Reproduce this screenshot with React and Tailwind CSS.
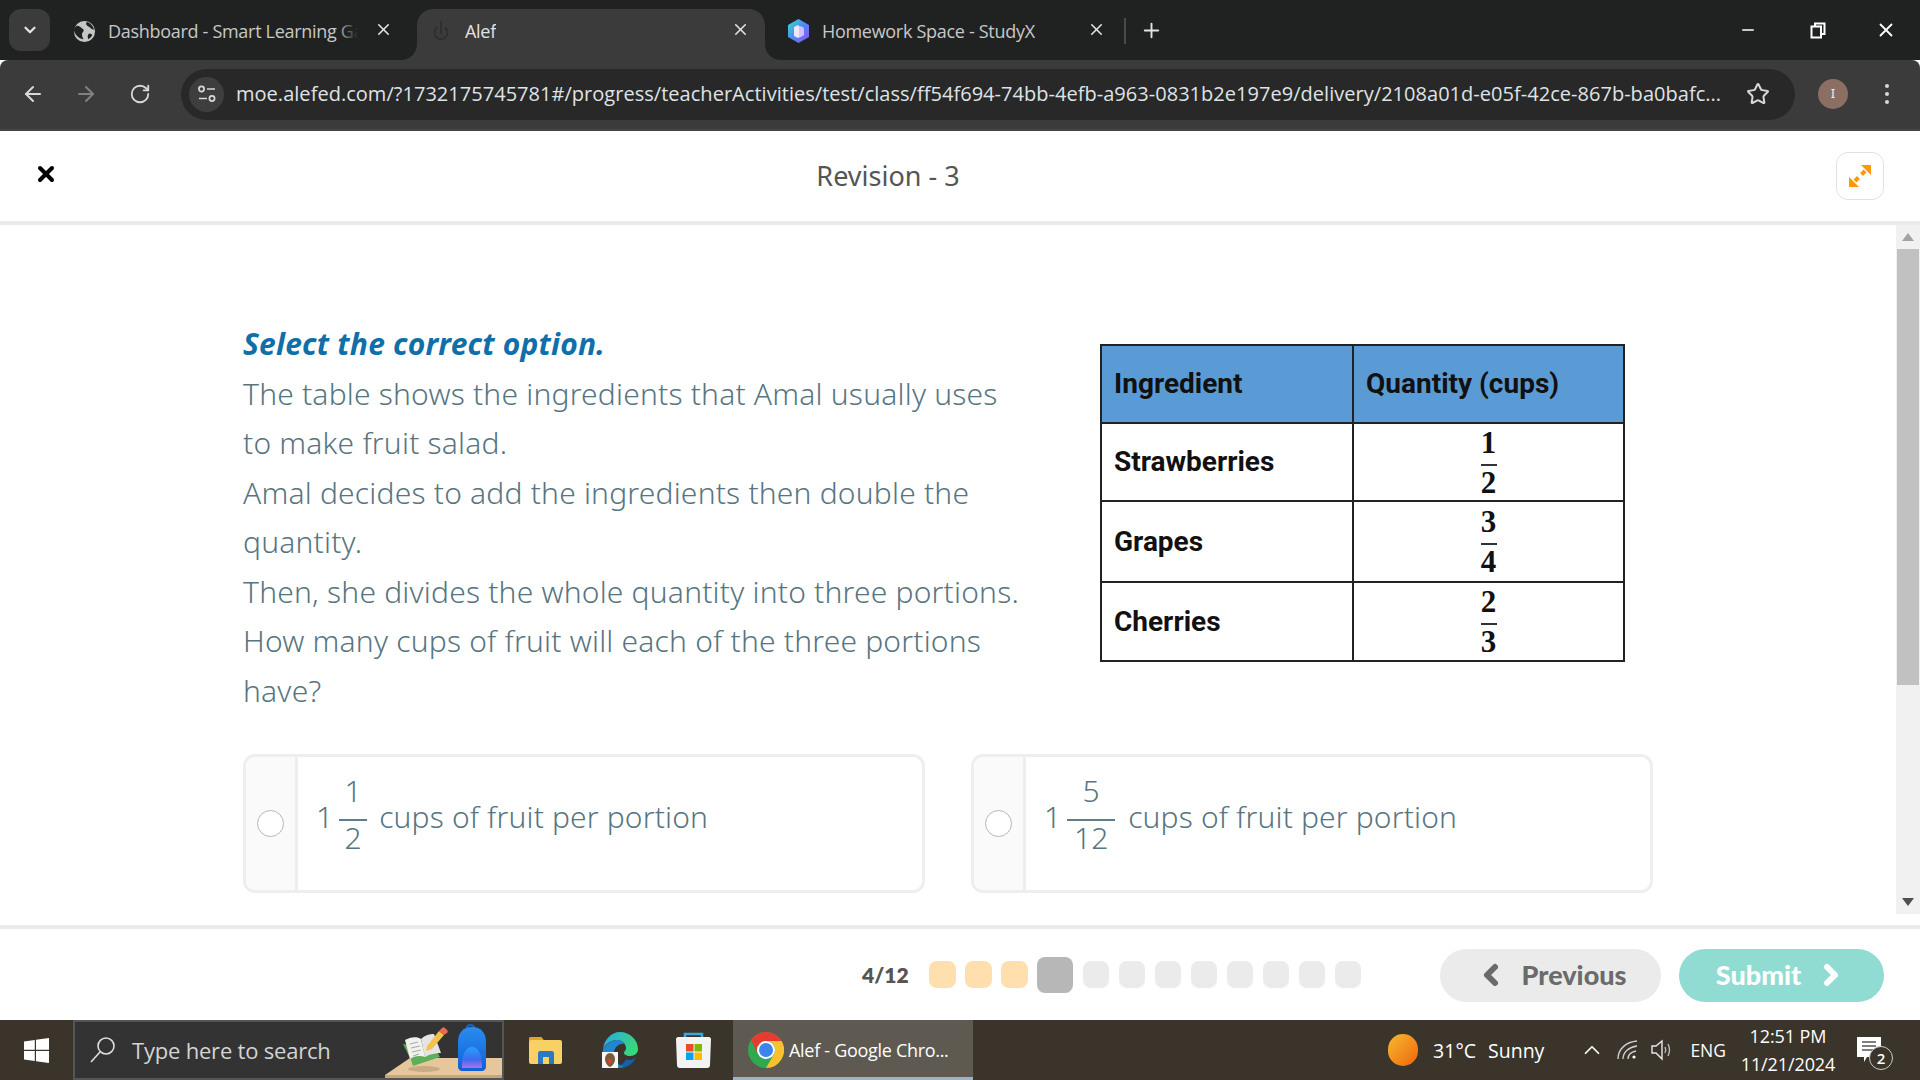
import React from "react";
import { X, ChevronDown, ArrowLeft, ArrowRight, RotateCw, Star, Plus, Minus, ChevronLeft, ChevronRight, ChevronUp } from "lucide-react";

const SANS = "font-['Noto_Sans','Open_Sans',sans-serif]";
const UI = "font-['Open_Sans','Noto_Sans',sans-serif]";
const BTN = "font-['Lato','Noto_Sans',sans-serif]";

function Tab({ active, icon, label, width, closeRight, fade }) {
  return (
    <div className={`relative flex items-center h-[51px] pb-[7px] ${active ? "bg-[#3b3b3b] rounded-t-2xl" : ""} ${width}`}>
      {active && (
        <svg className="absolute -left-[16px] bottom-0" width="16" height="16" viewBox="0 0 16 16"><path d="M16 0v16H0c9 0 16-7 16-16z" fill="#3b3b3b" /></svg>
      )}
      {active && (
        <svg className="absolute -right-[16px] bottom-0" width="16" height="16" viewBox="0 0 16 16"><path d="M0 0v16h16C7 16 0 9 0 0z" fill="#3b3b3b" /></svg>
      )}
      <div className="w-[48px] flex justify-center shrink-0">{icon}</div>
      <span className={`relative block overflow-hidden whitespace-nowrap text-[18px] tracking-[-0.3px] ${fade ? "w-[250px]" : ""} ${active ? "text-[#e3e3e3]" : "text-[#c8c8c8]"} ${UI}`}>
        {label}
        {fade && <span className="absolute right-0 top-0 bottom-0 w-[22px] bg-gradient-to-r from-transparent to-[#202221]" />}
      </span>
      <X className={`absolute ${closeRight} top-[11px] text-[#e3e3e3]`} size={19} strokeWidth={2} />
    </div>
  );
}

function Globe() {
  return (
    <svg width="23" height="23" viewBox="0 0 24 24">
      <circle cx="12" cy="12" r="11" fill="#c5c7c6" />
      <path d="M4 6c3 0 4 2 6 3s1 3 0 4-1 4 1 7c-4 0-9-4-10-9 0-2 1-4 3-5zM15 2c3 1 6 4 7 8-2 0-3-1-4-2s-3-1-4-3 0-2 1-3zM17 14c2 0 3 1 3 2-1 2-2 3-4 4-1-2-1-5 1-6z" fill="#202221" />
    </svg>
  );
}

function Gem() {
  return (
    <svg width="21" height="24" viewBox="0 0 21 24">
      <defs>
        <linearGradient id="gemg" x1="0" y1="0" x2="1" y2="1">
          <stop offset="0" stopColor="#35e0c8" />
          <stop offset="0.5" stopColor="#4a8cf5" />
          <stop offset="1" stopColor="#9a4ef0" />
        </linearGradient>
      </defs>
      <path d="M10.5 0 21 6v12l-10.500 6L0 18V6z" fill="url(#gemg)" />
      <path d="M6 8l4-2 1 1v11l-1 1-4-2z" fill="#efe6ff" />
      <path d="M11 7l4 1 1 2v6l-5 3z" fill="#d4c0ff" />
    </svg>
  );
}

function Tune() {
  return (
    <svg width="20" height="20" viewBox="0 0 20 20" fill="none" stroke="#d8d8d8" strokeWidth="1.7">
      <circle cx="4.5" cy="5" r="2.6" />
      <path d="M10 5h8M2 14.500h8" />
      <circle cx="15" cy="14.500" r="2.6" />
    </svg>
  );
}

function ChromeBar() {
  return (
    <div className="shrink-0">
      <div className="h-[60px] bg-[#202221] flex items-start pt-[9px] pl-[9px]">
        <div className="w-[41px] h-[42px] bg-[#3b3b3b] rounded-xl flex items-center justify-center">
          <ChevronDown size={18} strokeWidth={3} className="text-[#e3e3e3]" />
        </div>
        <div className="ml-[10px]"><Tab icon={<Globe />} label="Dashboard - Smart Learning Gateway" width="w-[357px]" closeRight="right-[24px]" fade /></div>
        <Tab active width="w-[348px]" closeRight="right-[15px]" label="Alef" icon={
          <svg width="16" height="22" viewBox="0 0 16 22" fill="none" stroke="#2c2c2c" strokeWidth="1.6"><path d="M8 1v13M4 7.500a6.500 6.500 0 1 0 8 0" /></svg>
        } />
        <div className="ml-[9px]"><Tab icon={<Gem />} label="Homework Space - StudyX" width="w-[347px]" closeRight="right-[15px]" /></div>
        <div className="w-[2px] h-[26px] bg-[#4a4a4a] mt-[9px] ml-[3px]" />
        <Plus size={23} strokeWidth={2} className="text-[#e3e3e3] mt-[10px] ml-[14px]" />
        <div className="flex-1" />
        <div className="flex items-center mt-[10px] text-white">
          <Minus size={18} strokeWidth={2} />
          <svg className="ml-[53px]" width="16" height="17" viewBox="0 0 16 17" fill="none" stroke="#fff" strokeWidth="2"><rect x="1.500" y="4.500" width="9.500" height="11" /><path d="M5 4V1.500h9.500V12H11" /></svg>
          <X className="ml-[49px] mr-[23px]" size={22} strokeWidth={2} />
        </div>
      </div>
      <div className="h-[71px] bg-[#3b3b3b] border-b-2 border-[#444] rounded-tl-lg rounded-tr-lg flex items-center pb-[1px]">
        <ArrowLeft size={24} strokeWidth={2} className="ml-[21px] text-[#d8d8d8]" />
        <ArrowRight size={24} strokeWidth={2} className="ml-[29px] text-[#808080]" />
        <RotateCw size={22} strokeWidth={2} className="ml-[31px] text-[#d8d8d8]" />
        <div className="ml-[30px] w-[1614px] h-[51px] rounded-full bg-[#282828] flex items-center pl-[8px]">
          <div className="w-[35px] h-[35px] rounded-full bg-[#3e3e3e] flex items-center justify-center"><Tune /></div>
          <span className={`ml-[12px] text-[20px] tracking-[0.03px] text-[#dfe3e6] whitespace-nowrap ${UI}`}>moe.alefed.com/?1732175745781#/progress/teacherActivities/test/class/ff54f694-74bb-4efb-a963-0831b2e197e9/delivery/2108a01d-e05f-42ce-867b-ba0bafc...</span>
          <div className="flex-1" />
          <Star size={24} strokeWidth={2} className="mr-[25px] text-[#d8d8d8]" />
        </div>
        <div className="ml-[23px] w-[30px] h-[30px] rounded-full bg-[#8b6f63] flex items-center justify-center text-[13px] text-[#eee]">I</div>
        <div className="ml-[37px] flex flex-col gap-[4px]">
          <span className="w-[4px] h-[4px] rounded-full bg-[#d8d8d8]" />
          <span className="w-[4px] h-[4px] rounded-full bg-[#d8d8d8]" />
          <span className="w-[4px] h-[4px] rounded-full bg-[#d8d8d8]" />
        </div>
      </div>
    </div>
  );
}

function Frac({ n, d, line }) {
  return (
    <span className="inline-flex flex-col items-center text-[30px] leading-[38px]">
      <span>{n}</span>
      <span className={`h-[2px] mt-[9px] bg-[#5f7c88] ${line}`} />
      <span className="-mt-[2px]">{d}</span>
    </span>
  );
}

function Option({ n, d, line, gap }) {
  return (
    <div className="w-[682px] h-[139px] border-[3px] border-[#eeeeee] rounded-xl flex overflow-hidden">
      <div className="w-[52px] bg-[#fafafa] border-r-[3px] border-[#eeeeee] flex items-center justify-center shrink-0">
        <span className="w-[27px] h-[27px] rounded-full border border-[#b5b5b5] bg-white" />
      </div>
      <div className={`flex items-start pl-[18px] pt-[11px] text-[30px] text-[#577581] ${SANS} font-light`}>
        <span className="mt-[26px]">1</span>
        <span className="ml-[6px]"><Frac n={n} d={d} line={line} /></span>
        <span className={`mt-[26px] tracking-[0.15px] ${gap}`}>cups of fruit per portion</span>
      </div>
    </div>
  );
}

function QFrac({ n, d }) {
  return (
    <div className="flex flex-col items-center font-['Liberation_Serif',serif] font-bold text-[31px] leading-[31px] text-[#111]">
      <span className="h-[31px]">{n}</span>
      <span className="w-[16px] h-[2px] mt-[6px] bg-[#333]" />
      <span className="h-[31px] mt-[1px]">{d}</span>
    </div>
  );
}

function RecipeTable() {
  const cell = "border-2 border-[#222] pl-[12px]";
  const rows = [["Strawberries", "1", "2", "h-[78px]"], ["Grapes", "3", "4", "h-[81px]"], ["Cherries", "2", "3", "h-[79px]"]];
  return (
    <table className="w-[525px] border-collapse font-['Roboto',sans-serif] font-bold text-[28px] text-[#111] table-fixed">
      <colgroup><col className="w-[252px]" /><col /></colgroup>
      <thead>
        <tr className="h-[78px] bg-[#5b9bd5]">
          <th className={`${cell} text-left font-bold`}>Ingredient</th>
          <th className={`${cell} text-left font-bold`}>Quantity (cups)</th>
        </tr>
      </thead>
      <tbody>
        {rows.map(([a, n, d, h]) => (
          <tr key={a} className={h}>
            <td className={cell}>{a}</td>
            <td className="border-2 border-[#222]"><QFrac n={n} d={d} /></td>
          </tr>
        ))}
      </tbody>
    </table>
  );
}

function Content() {
  return (
    <div className="flex-1 min-h-0 flex">
      <div className="flex-1 min-w-0 pl-[243px] pt-[94px]">
        <div className="flex items-start h-[435px]">
          <div className={`w-[857px] ${SANS} text-[30px] leading-[49.500px] tracking-[0.2px] text-[#577581] font-light`}>
            <div className="italic font-bold text-[#0f6fa8]">Select the correct option.</div>
            <div>The table shows the ingredients that Amal usually uses</div>
            <div>to make fruit salad.</div>
            <div>Amal decides to add the ingredients then double the</div>
            <div>quantity.</div>
            <div>Then, she divides the whole quantity into three portions.</div>
            <div>How many cups of fruit will each of the three portions</div>
            <div>have?</div>
          </div>
          <div className="pt-[25px]"><RecipeTable /></div>
        </div>
        <div className="flex gap-[46px]">
          <Option n="1" d="2" line="w-[28px]" gap="ml-[12px]" />
          <Option n="5" d="12" line="w-[48px]" gap="ml-[13px]" />
        </div>
      </div>
      <div className="w-[24px] mb-[11px] bg-[#f1f1f1] flex flex-col items-center shrink-0">
        <svg className="mt-[8px]" width="12" height="8" viewBox="0 0 12 8"><path d="M6 0l6 8H0z" fill="#a3a3a3" /></svg>
        <div className="mt-[8px] w-[22px] h-[436px] bg-[#c1c1c1]" />
        <div className="flex-1" />
        <svg className="mb-[8px]" width="12" height="8" viewBox="0 0 12 8"><path d="M6 8l6-8H0z" fill="#505050" /></svg>
      </div>
    </div>
  );
}

function Footer() {
  const pills = ["d", "d", "d", "a", "p", "p", "p", "p", "p", "p", "p", "p"];
  return (
    <div className="h-[95px] shrink-0 bg-white border-t-4 border-[#ebebeb] flex items-center">
      <span className={`ml-[862px] w-[48px] text-[21px] font-extrabold text-[#555] ${BTN}`}>4/12</span>
      <div className="ml-[19px] flex items-center gap-[9.500px] w-[432px]">
        {pills.map((p, i) => (
          <span key={i} className={p === "a" ? "w-[36px] h-[36px] rounded-lg bg-[#b7b7b7]" : p === "d" ? "w-[26.500px] h-[27px] rounded-lg bg-[#ffdfae]" : "w-[26.500px] h-[27px] rounded-lg bg-[#ebebeb]"} />
        ))}
      </div>
      <div className={`ml-[79px] mt-[1px] w-[221px] h-[53px] rounded-full bg-[#ebebeb] flex items-center justify-center gap-[15px] text-[27px] font-black text-[#6b6b6b] ${BTN}`}>
        <ChevronLeft size={32} strokeWidth={4.500} />Previous
      </div>
      <div className={`ml-[18px] mt-[1px] w-[205px] h-[53px] rounded-full bg-[#90dcd2] flex items-center justify-center gap-[14px] text-[27px] font-black text-white ${BTN}`}>
        Submit<ChevronRight size={32} strokeWidth={4.500} />
      </div>
    </div>
  );
}

function WinLogo() {
  return (
    <svg width="25" height="25" viewBox="0 0 25 25" fill="#fff">
      <path d="M0 3.500 10.800 2v9.800H0zM12 1.800 25 0v11.800H12zM0 13h10.800v10L0 21.500zM12 13h13v12l-13-1.800z" />
    </svg>
  );
}

function Illustration() {
  return (
    <svg width="118" height="56" viewBox="0 0 118 56" className="shrink-0">
      <defs>
        <linearGradient id="bag" x1="0" y1="0" x2="0" y2="1">
          <stop offset="0" stopColor="#2a8cf0" />
          <stop offset="1" stopColor="#1060d8" />
        </linearGradient>
        <linearGradient id="pocket" x1="0" y1="0" x2="0" y2="1">
          <stop offset="0" stopColor="#2aa0f5" />
          <stop offset="0.6" stopColor="#3a6cf0" />
          <stop offset="1" stopColor="#b070f0" />
        </linearGradient>
      </defs>
      <path d="M1 53 26 36h92v20H1z" fill="#e6c79c" />
      <path d="M1 53h117v3H1z" fill="#c9a67a" />
      <ellipse cx="40" cy="47" rx="16" ry="3" fill="#c8ab84" />
      <path d="M19 22 27 38 29 44 56 35 52 28z" fill="#5fae58" />
      <path d="M21 18c5-3 12-4 16-1l4 18c-5-2-11-1-15 2z" fill="#f1f1ee" />
      <path d="M37 17c4-4 9-5 13-5l7 19c-5 0-11 1-16 4z" fill="#e4e4e2" />
      <path d="M26 22l8-2M27 26l9-2M28 30l9-2M29 34l6-2" stroke="#a8a8a8" strokeWidth="1" />
      <path d="M43 24l12-15 5 4-12 14-6 2z" fill="#f4c14f" />
      <path d="M55 9l3-3c1-1 2-1 3 0l2 2c1 1 1 2 0 3l-3 2z" fill="#ea6b55" />
      <path d="M83 6c0-4 7-4 7 0" fill="none" stroke="#1565c8" strokeWidth="2" />
      <path d="M74 20c0-9 5-15 14-15s14 6 14 15v25c0 2-2 4-4 4H78c-2 0-4-2-4-4z" fill="url(#bag)" />
      <path d="M78 42c0-10 4-17 10-17s10 7 10 17v4H78z" fill="url(#pocket)" />
    </svg>
  );
}

function EdgeLogo() {
  return (
    <div className="relative w-[36px] h-[36px]">
      <svg width="36" height="36" viewBox="0 0 36 36">
        <defs>
          <linearGradient id="edgea" x1="0" y1="0" x2="1" y2="0.500">
            <stop offset="0" stopColor="#2aa8e8" />
            <stop offset="1" stopColor="#38d878" />
          </linearGradient>
        </defs>
        <path d="M34 25c-3 7-9 11-16 11-3 0-6-1-8-2 6 1 12-1 14-7 3 2 7 1 10-2z" fill="#1560a8" />
        <path d="M1 17C2 8 9 0 18 0c10 0 18 8 18 17 0 4-3 7-8 7-4 0-6-2-6-3 0-2 2-2 2-5 0-4-4-8-9-8C9 8 3 12 1 17z" fill="url(#edgea)" />
        <path d="M1 17c3-5 8-9 14-9 4 0 7 2 8 4-5-1-10 2-11 8-1 6 3 13 10 15-4 1-8 1-12-1C4 31 0 24 1 17z" fill="#1f86d0" />
      </svg>
      <span className="absolute left-0 bottom-0 w-[16px] h-[16px] bg-[#f7f7f5] flex items-center justify-center">
        <svg width="12" height="14" viewBox="0 0 12 14">
          <path d="M6 0c3 0 5 3 5 6s-2 7-5 8C3 13 1 9 1 6s2-6 5-6z" fill="#7a5a3a" />
          <path d="M4 6h4v3c0 1-1 2-2 2s-2-1-2-2z" fill="#c8452f" />
        </svg>
      </span>
    </div>
  );
}

function ChromeLogo() {
  return (
    <svg width="36" height="36" viewBox="0 0 36 36">
      <circle cx="18" cy="18" r="18" fill="#2fa84f" />
      <path d="M33.600 9A18 18 0 0 0 3.100 7.900L10.200 22.500A9 9 0 0 1 18 9z" fill="#e53b30" />
      <path d="M33.600 9A18 18 0 0 1 18 36L25.800 22.500A9 9 0 0 0 18 9z" fill="#fbc02d" />
      <circle cx="18" cy="18" r="9" fill="#fff" />
      <circle cx="18" cy="18" r="7" fill="#3f83ee" />
    </svg>
  );
}

function Taskbar() {
  return (
    <div className={`h-[60px] shrink-0 bg-[#3a342b] flex items-center ${UI} relative`}>
      <div className="ml-[24px]"><WinLogo /></div>
      <div className="ml-[24px] w-[431px] h-[60px] bg-[#333333] border-2 border-[#555] flex items-center overflow-hidden">
        <svg className="ml-[14px]" width="28" height="28" viewBox="0 0 28 28" fill="none" stroke="#dddddd" strokeWidth="1.600">
          <circle cx="17" cy="10" r="8" />
          <path d="M11 16 2 26" />
        </svg>
        <span className="ml-[15px] text-[22px] tracking-[-0.2px] text-[#d4d4d4] whitespace-nowrap w-[235px] pt-[1px]">Type here to search</span>
        <div className="flex-1" />
        <Illustration />
      </div>
      <svg className="ml-[25px]" width="33" height="27" viewBox="0 0 33 27">
        <path d="M0 1.500C0 .5.500 0 1.500 0h11l3 4H0z" fill="#e0a526" />
        <rect y="3" width="33" height="24" rx="2" fill="#f8d063" />
        <path d="M9 27V16c0-1 1-2 2-2h12c1 0 2 1 2 2v11h-5v-7h-6v7z" fill="#2b79c2" />
      </svg>
      <div className="ml-[40px]"><EdgeLogo /></div>
      <svg className="ml-[38px]" width="35" height="36" viewBox="0 0 35 36">
        <path d="M9 6V2h17v4" fill="none" stroke="#35a8e0" strokeWidth="2.500" />
        <path d="M0 7c0-1 1-2 2-2h31c1 0 2 1 2 2l-1 26c0 2-1 3-3 3H4c-2 0-3-1-3-3z" fill="#f3f3f3" />
        <rect x="10" y="12" width="7.500" height="7.500" fill="#ea4b2a" />
        <rect x="18.500" y="12" width="7.500" height="7.500" fill="#7fba00" />
        <rect x="10" y="20.500" width="7.500" height="7.500" fill="#00a4ef" />
        <rect x="18.500" y="20.500" width="7.500" height="7.500" fill="#ffb900" />
      </svg>
      <div className="ml-[22px] w-[240px] h-[60px] bg-[#5e5a52] border-b-[3px] border-[#9db2c4] flex items-center pt-[3px]">
        <div className="ml-[15px]"><ChromeLogo /></div>
        <span className="ml-[5px] text-[18px] tracking-[-0.3px] text-white whitespace-nowrap">Alef - Google Chro...</span>
      </div>
      <div className="flex-1" />
      <div className="w-[30px] h-[32px] rounded-full bg-gradient-to-br from-[#f2b92e] to-[#f0620a]" />
      <span className="ml-[15px] text-[19.500px] text-white whitespace-nowrap pt-[1px]">31°C</span>
      <span className="ml-[12px] text-[19.500px] text-white whitespace-nowrap pt-[1px]">Sunny</span>
      <ChevronUp size={26} strokeWidth={1.600} className="ml-[35px] text-white" />
      <svg className="ml-[12px]" width="22" height="20" viewBox="0 0 22 20" fill="none" stroke="#cfcfcf" strokeWidth="1.400">
        <path d="M1 19C1 9 9 2 20 1M6 19c0-7 6-12 14-13M11 19c0-4 3-7 8-8" />
        <circle cx="17" cy="17" r="1.600" fill="#fff" stroke="none" />
      </svg>
      <svg className="ml-[12px]" width="24" height="22" viewBox="0 0 24 22" fill="none" stroke="#e8e8e8" strokeWidth="1.400">
        <path d="M1 7v7h4l6 6V2L5 7z" />
        <path d="M14 8c1 2 1 4 0 6M17 5c2 4 2 8 0 12" stroke="#bbb" />
      </svg>
      <span className="ml-[15px] text-[17.500px] text-white whitespace-nowrap">ENG</span>
      <div className="ml-[9px] w-[106px] flex flex-col items-center text-[18px] leading-[28px] tracking-[-0.1px] text-white whitespace-nowrap">
        <span>12:51 PM</span>
        <span>11/21/2024</span>
      </div>
      <div className="relative ml-[16px] mr-[39px] w-[24px] h-[30px]">
        <svg width="24" height="30" viewBox="0 0 24 30"><path d="M0 2h24v20H10l-3 5v-5H0z" fill="#fff" /><path d="M5 7h14M5 11h14M5 15h14" stroke="#555" strokeWidth="1.400" /></svg>
        <span className="absolute -right-[12px] top-[11px] w-[24px] h-[24px] rounded-full bg-[#3a342b] border border-[#ccc] flex items-center justify-center text-[15px] font-semibold text-white">2</span>
      </div>
    </div>
  );
}

export default function App() {
  return (
    <div className="w-[1920px] h-[1080px] overflow-hidden flex flex-col bg-white">
      <ChromeBar />
      <div className="h-[94px] shrink-0 border-b-[4px] border-[#ebebeb] relative flex items-center justify-center pr-[144px]">
        <X size={24} strokeWidth={4} className="absolute left-[34px] top-[31px] text-black" />
        <span className={`text-[27px] text-[#555] ${SANS}`}>Revision - 3</span>
        <div className="absolute left-[1836px] top-[21px] w-[48px] h-[48px] border border-[#e2e2e2] rounded-xl flex items-center justify-center">
          <svg width="24" height="24" viewBox="0 0 24 24" fill="#ff9800">
            <path d="M13 1h10v10z" />
            <path d="M1 23h10L1 13z" />
            <path d="M17 7 13.500 10.500M10.500 13.500 7 17" stroke="#ff9800" strokeWidth="4" fill="none" />
          </svg>
        </div>
      </div>
      <Content />
      <Footer />
      <Taskbar />
    </div>
  );
}
